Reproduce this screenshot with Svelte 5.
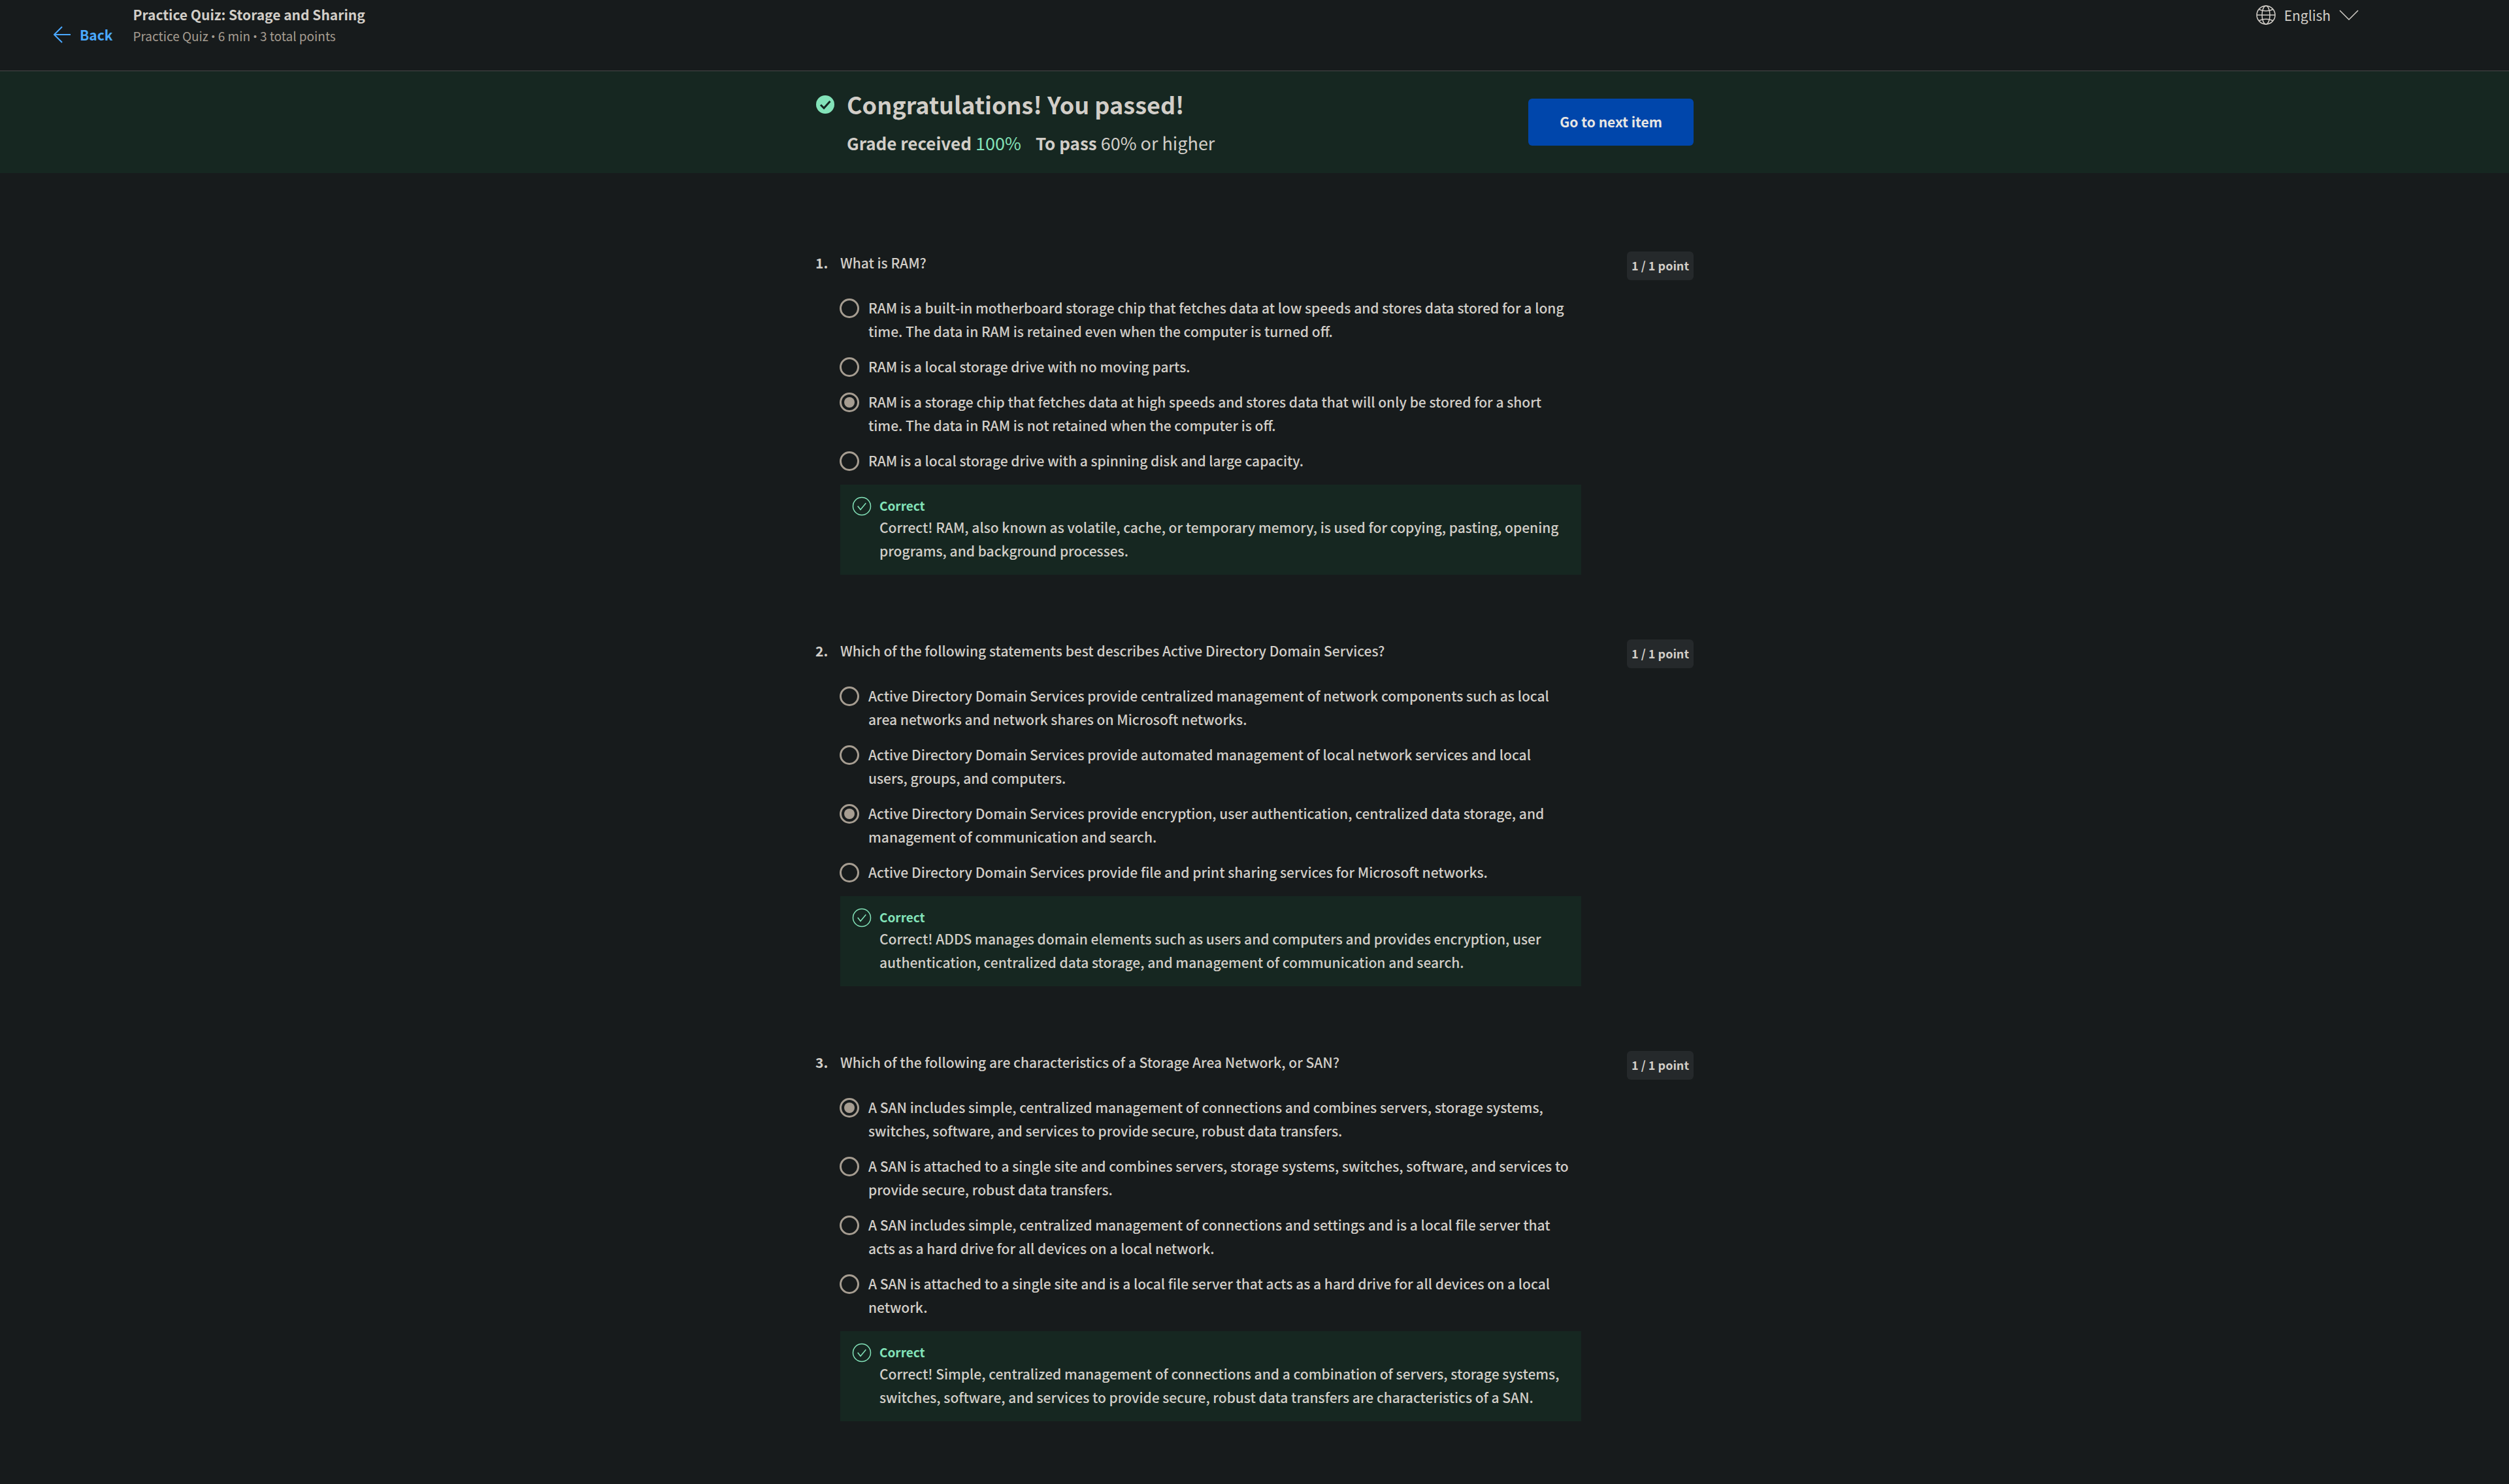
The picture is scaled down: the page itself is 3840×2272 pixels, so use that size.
<script lang="ts">
  type Question = {
    prompt: string;
    options: string[];
    chosen: number;
    feedback: string;
  };

  const questions: Question[] = [
    {
      prompt: 'What is RAM?',
      options: [
        'RAM is a built-in motherboard storage chip that fetches data at low speeds and stores data stored for a long time. The data in RAM is retained even when the computer is turned off.',
        'RAM is a local storage drive with no moving parts.',
        'RAM is a storage chip that fetches data at high speeds and stores data that will only be stored for a short time. The data in RAM is not retained when the computer is off.',
        'RAM is a local storage drive with a spinning disk and large capacity.'
      ],
      chosen: 2,
      feedback:
        'Correct! RAM, also known as volatile, cache, or temporary memory, is used for copying, pasting, opening programs, and background processes.'
    },
    {
      prompt: 'Which of the following statements best describes Active Directory Domain Services?',
      options: [
        'Active Directory Domain Services provide centralized management of network components such as local area networks and network shares on Microsoft networks.',
        'Active Directory Domain Services provide automated management of local network services and local users, groups, and computers.',
        'Active Directory Domain Services provide encryption, user authentication, centralized data storage, and management of communication and search.',
        'Active Directory Domain Services provide file and print sharing services for Microsoft networks.'
      ],
      chosen: 2,
      feedback:
        'Correct! ADDS manages domain elements such as users and computers and provides encryption, user authentication, centralized data storage, and management of communication and search.'
    },
    {
      prompt: 'Which of the following are characteristics of a Storage Area Network, or SAN?',
      options: [
        'A SAN includes simple, centralized management of connections and combines servers, storage systems, switches, software, and services to provide secure, robust data transfers.',
        'A SAN is attached to a single site and combines servers, storage systems, switches, software, and services to provide secure, robust data transfers.',
        'A SAN includes simple, centralized management of connections and settings and is a local file server that acts as a hard drive for all devices on a local network.',
        'A SAN is attached to a single site and is a local file server that acts as a hard drive for all devices on a local network.'
      ],
      chosen: 0,
      feedback:
        'Correct! Simple, centralized management of connections and a combination of servers, storage systems, switches, software, and services to provide secure, robust data transfers are characteristics of a SAN.'
    }
  ];
</script>

<div class="page">
  <header class="topbar">
    <a class="back" href="#back">
      <svg class="arrow" viewBox="0 0 26 26" aria-hidden="true">
        <path d="M13 1 1 13l12 12M1 13h25" />
      </svg>
      Back
    </a>
    <div class="titles">
      <h1>Practice Quiz: Storage and Sharing</h1>
      <p>Practice Quiz <span class="dot">•</span> 6 min <span class="dot">•</span> 3 total points</p>
    </div>
    <button class="language" type="button">
      <svg class="globe" viewBox="0 0 30 30" aria-hidden="true">
        <circle cx="15" cy="15" r="14" />
        <ellipse cx="15" cy="15" rx="6" ry="14" />
        <path d="M1 15h28M4.500 6.500Q15 11 25.500 6.500M4.500 23.500Q15 19 25.500 23.500" />
      </svg>
      English
      <svg class="chevron" viewBox="0 0 30 18" aria-hidden="true">
        <path d="m1 2 14 14L29 2" />
      </svg>
    </button>
  </header>

  <section class="banner">
    <div class="column result">
      <svg class="passed" viewBox="0 0 28 28" aria-hidden="true">
        <circle cx="14" cy="14" r="14" />
        <path d="m7 14.500 5 5 9.500-10.500" />
      </svg>
      <div class="summary">
        <h2>Congratulations! You passed!</h2>
        <p class="grades">
          <span><strong>Grade received</strong> <span class="score">100%</span></span>
          <span><strong>To pass</strong> 60% or higher</span>
        </p>
      </div>
      <button class="next" type="button">Go to next item</button>
    </div>
  </section>

  <main class="column questions">
    {#each questions as question, q}
      <section class="question">
        <span class="number">{q + 1}.</span>
        <fieldset>
          <legend>{question.prompt}</legend>
          <div class="options">
            {#each question.options as option, o}
              <label class="option">
                <input type="radio" name="question-{q}" checked={o === question.chosen} />
                <span>{option}</span>
              </label>
            {/each}
          </div>
          <div class="feedback">
            <svg class="correct" viewBox="0 0 30 30" aria-hidden="true">
              <circle cx="15" cy="15" r="13.500" />
              <path d="M8.700 14.700 13 20.300l8.300-10" />
            </svg>
            <div>
              <h3>Correct</h3>
              <p>{question.feedback}</p>
            </div>
          </div>
        </fieldset>
        <span class="points">1 / 1 point</span>
      </section>
    {/each}
  </main>
</div>

<style>
  :global(body) {
    background: #171b1c;
  }

  .page {
    min-height: 100vh;
    box-sizing: border-box;
    background: #171b1c;
    color: #d2cec8;
    font: 400 21px/36px 'Source Sans Pro', 'Noto Sans CJK SC', sans-serif;
  }

  h1,
  h2,
  h3,
  p {
    margin: 0;
  }

  button {
    border: 0;
    font-family: inherit;
    cursor: pointer;
  }

  svg {
    display: block;
    flex: none;
    fill: none;
    stroke: currentColor;
  }

  .topbar {
    display: flex;
    align-items: flex-start;
    height: 108px;
    padding: 0 230px 0 82px;
    border-bottom: 1px solid #474747;
  }

  .back {
    display: flex;
    align-items: center;
    gap: 14px;
    margin-top: 35px;
    color: #4aa8ff;
    font-weight: 700;
    text-decoration: none;
  }

  .arrow {
    width: 26px;
    height: 26px;
    stroke-width: 2;
  }

  .titles {
    flex: 1;
    padding: 4px 0 0 31px;
  }

  .titles h1 {
    font-size: 21px;
    font-weight: 700;
    line-height: 36px;
  }

  .titles p {
    color: #a69d91;
    font-size: 19px;
    line-height: 30px;
  }

  .dot {
    font-family: Roboto, sans-serif;
    line-height: 1;
  }

  .language {
    display: flex;
    align-items: center;
    gap: 13px;
    margin-top: 5px;
    padding: 0;
    background: none;
    color: inherit;
    font-size: 21px;
    line-height: 36px;
  }

  .globe {
    width: 30px;
    height: 30px;
    stroke-width: 1.5;
  }

  .chevron {
    width: 30px;
    height: 18px;
    stroke-width: 1.5;
  }

  .banner {
    background: #162721;
  }

  .column {
    box-sizing: border-box;
    width: 100%;
    max-width: 1344px;
    margin: 0 auto;
  }

  .result {
    display: flex;
    align-items: flex-start;
    padding: 20px 0 21px;
  }

  .passed {
    width: 28px;
    height: 28px;
    margin: 17px 19px 0 1px;
    color: #83e3b9;
  }

  .passed circle {
    fill: currentColor;
    stroke: none;
  }

  .passed path {
    stroke: #162721;
    stroke-width: 3;
  }

  .summary {
    flex: 1;
  }

  h2 {
    font-size: 36px;
    font-weight: 700;
    line-height: 60px;
  }

  .grades {
    display: flex;
    gap: 22px;
    margin-top: 5px;
    font-size: 27px;
    line-height: 50px;
  }

  .grades strong {
    font-size: 26px;
    font-weight: 700;
  }

  .score {
    color: #83e3b9;
  }

  .next {
    margin-top: 22px;
    padding: 17px 48px 19px;
    border-radius: 6px;
    background: #0046ab;
    color: #e8e6e3;
    font-size: 21px;
    font-weight: 700;
    line-height: 36px;
  }

  .questions {
    display: flex;
    flex-direction: column;
    gap: 98px;
    padding: 119px 0 96px;
  }

  .question {
    display: flex;
    align-items: flex-start;
    font-weight: 500;
  }

  .number {
    width: 38px;
    font-weight: 700;
  }

  fieldset {
    width: 1134px;
    min-width: 0;
    margin: 0;
    padding: 0;
    border: 0;
  }

  legend {
    padding: 0;
  }

  .options {
    display: flex;
    flex-direction: column;
    gap: 18px;
    padding: 33px 18px 19px 0;
  }

  .option {
    display: flex;
    align-items: flex-start;
    gap: 14px;
  }

  input {
    flex: none;
    display: grid;
    place-content: center;
    box-sizing: border-box;
    width: 30px;
    height: 30px;
    margin: 4px 0 0 -1px;
    border: 3px solid #a69d91;
    border-radius: 50%;
    appearance: none;
  }

  input:checked::before {
    content: '';
    width: 16px;
    height: 16px;
    border-radius: 50%;
    background: #a69d91;
  }

  .feedback {
    display: flex;
    gap: 12px;
    padding: 17px 18px 19px;
    background: #162721;
  }

  .correct {
    width: 30px;
    height: 30px;
    margin-top: 1px;
    color: #83e3b9;
    stroke-width: 1.5;
  }

  h3 {
    color: #83e3b9;
    font-size: 19px;
    font-weight: 700;
    line-height: 30px;
  }

  .points {
    margin: 1px 0 0 auto;
    padding: 6px 7px 8px;
    border-radius: 6px;
    background: #25292b;
    font-size: 18px;
    font-weight: 700;
    line-height: 30px;
  }
</style>
